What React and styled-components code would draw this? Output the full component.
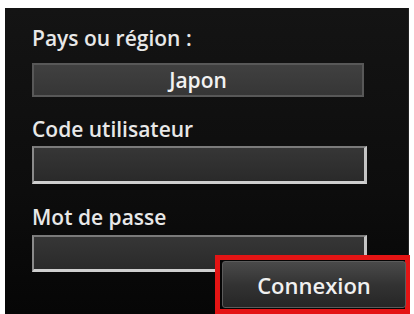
import React from "react";
import styled, { createGlobalStyle } from "styled-components";

const Global = createGlobalStyle`
  html, body { margin: 0; padding: 0; background: #ffffff; overflow: hidden; }
  body { font-family: "Open Sans", "DejaVu Sans", sans-serif; }
`;

const Page = styled.div`
  padding: 8px 5px 0 5px;
  width: 414px;
  height: 314px;
  box-sizing: border-box;
`;

const Panel = styled.div`
  position: relative;
  height: 306px;
  background: linear-gradient(#141414, #0d0d0d 60%, #060606);
  border-right: 1px solid #222;
  padding: 18px 0 0 27px;
  box-sizing: border-box;
  display: flex;
  flex-direction: column;
`;

const Label = styled.div`
  font-size: 21px;
  font-weight: 600;
  line-height: 25px;
  color: #e8e8e8;
  margin-top: ${(p) => p.$mt || 0}px;
`;

const Select = styled.div`
  margin-top: 12px;
  width: 332px;
  height: 34px;
  box-sizing: border-box;
  background: linear-gradient(#404040, #363636);
  border: 2px solid #585858;
  display: flex;
  align-items: center;
  justify-content: center;
  color: #f2f2f2;
  font-size: 21px;
  font-weight: 600;
`;

const Input = styled.div`
  margin-top: ${(p) => p.$mt}px;
  width: 335px;
  height: ${(p) => p.$h}px;
  box-sizing: border-box;
  background: linear-gradient(#363636, #2a2a2a);
  border-top: 2px solid #7a7a7a;
  border-left: 2px solid #8a8a8a;
  border-right: 3px solid #c4c4c4;
  border-bottom: 3px solid #cfcfcf;
`;

const Highlight = styled.div`
  position: absolute;
  left: 210px;
  top: 247px;
  width: 195px;
  height: 59px;
  box-sizing: border-box;
  border: 5px solid #e41414;
  background: #050505;
  padding: 1px 0 0 2px;
`;

const Button = styled.div`
  width: 184px;
  height: 47px;
  box-sizing: border-box;
  border-radius: 3px;
  border: 1px solid #5c5c5c;
  background: linear-gradient(#4a4a4a, #333333 50%, #262626);
  display: flex;
  align-items: center;
  justify-content: center;
  color: #f0f0f0;
  font-size: 22px;
  font-weight: 600;
`;

export default function App() {
  return (
    <Page>
      <Global />
      <Panel>
        <Label>Pays ou région :</Label>
        <Select>Japon</Select>
        <Label $mt={20}>Code utilisateur</Label>
        <Input $mt={4} $h={38} />
        <Label $mt={21}>Mot de passe</Label>
        <Input $mt={5} $h={37} />
        <Highlight>
          <Button>Connexion</Button>
        </Highlight>
      </Panel>
    </Page>
  );
}
